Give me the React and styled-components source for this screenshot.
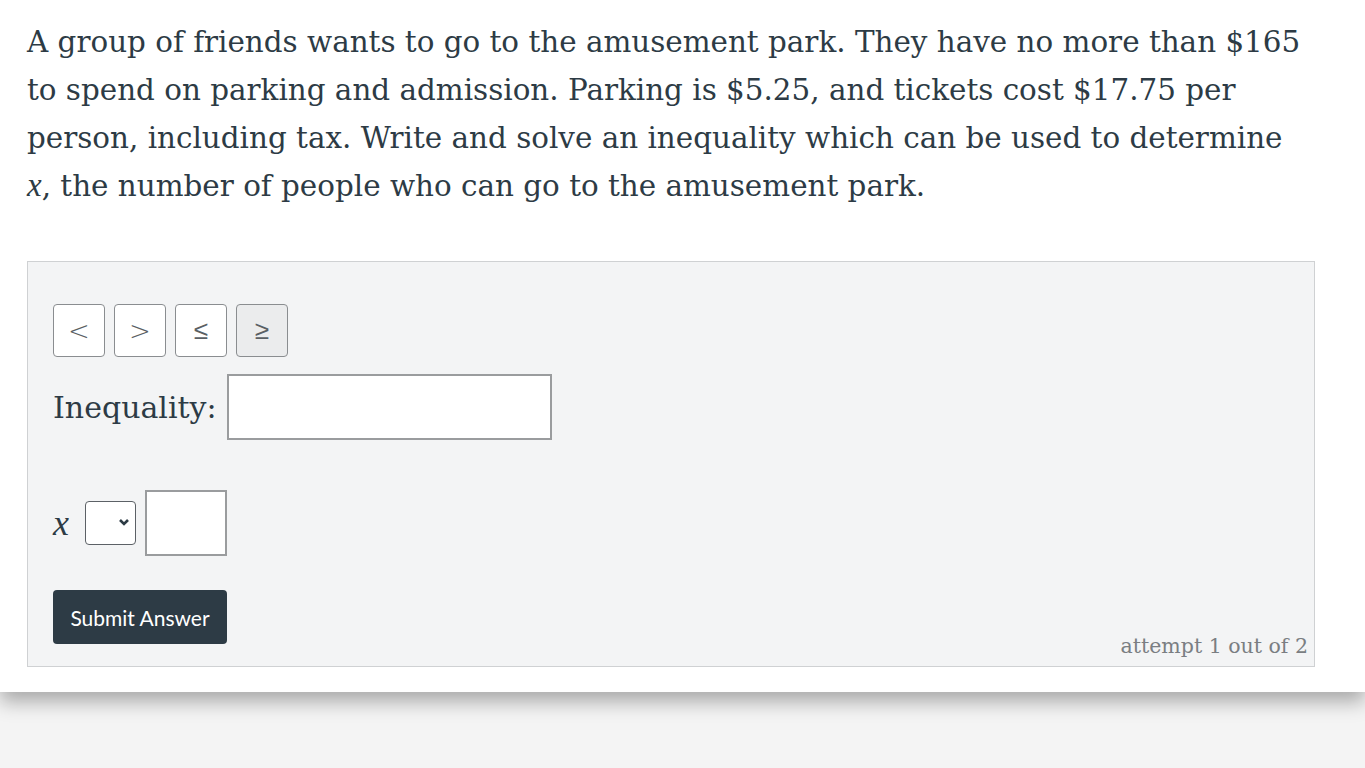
import React from 'react'
import styled, { createGlobalStyle } from 'styled-components'

const GlobalStyle = createGlobalStyle`
html, body {
    margin: 0;
    padding: 0;
    background: #f5f5f5;
}
* {
    box-sizing: border-box;
}
`;

const serif = `"DejaVu Serif", Georgia, "Liberation Serif", serif`;

const Page = styled.div`
width: 1365px;
height: 768px;
overflow: hidden;
background: #f4f4f4;
`;

const Card = styled.div`
background: #fff;
padding: 18px 50px 25px 27px;
box-shadow: 0 10px 18px rgba(0, 0, 0, 0.3);
`;

const Prompt = styled.p`
margin: 0;
font-family: ${serif};
font-size: 29.4px;
line-height: 48px;
color: #2d3b45;
white-space: nowrap;
`;

// math variable, set like TeX italic
const MathVar = styled.span`
font-family: "Liberation Serif", "DejaVu Serif", serif;
font-style: italic;
font-size: ${(props) => props.size || 34}px;
line-height: 1;
color: #2d3b45;
`;

const Panel = styled.div`
margin-top: 51px;
background: #f3f4f5;
border: 1px solid #cfd1d3;
padding: 42px 6px 8px 25px;
display: flex;
flex-direction: column;
`;

const Toolbar = styled.div`
display: flex;
gap: 9px;
`;

const SymbolBtn = styled.button`
width: 52px;
height: 53px;
border: 1px solid #8a8d90;
border-radius: 4px;
background: ${(props) => (props.active ? "#ebeced" : "#fff")};
color: #5a5f64;
font-family: "DejaVu Sans", sans-serif;
font-size: 26px;
font-weight: 200;
padding: 0;
display: flex;
align-items: center;
justify-content: center;
`;

const Row = styled.div`
display: flex;
align-items: center;
margin-top: ${(props) => props.mt || 0}px;
`;

const Label = styled.span`
font-family: ${serif};
font-size: 30px;
color: #2d3b45;
margin-right: 10px;
`;

const TextBox = styled.input`
width: ${(props) => props.w}px;
height: 66px;
border: 2px solid #9a9c9e;
background: #fff;
outline: none;
`;

const SelectWrap = styled.div`
position: relative;
width: 51px;
height: 44px;
margin: 0 9px 0 16px;
`;

const Select = styled.select`
appearance: none;
width: 100%;
height: 100%;
border: 1px solid #5c6166;
border-radius: 4px;
background: #fff;
`;

const Chevron = styled.svg`
position: absolute;
right: 5px;
top: 15px;
pointer-events: none;
`;

const Submit = styled.button`
margin-top: 34px;
width: 174px;
height: 54px;
border: none;
border-radius: 4px;
background: #2d3b45;
color: #fff;
font-family: Lato, "Open Sans", sans-serif;
font-size: 21px;
padding: 0;
`;

const Attempt = styled.div`
align-self: flex-end;
font-family: ${serif};
font-size: 20.5px;
color: #7a7e82;
margin-top: -10px;
`;

export default function App() {
    return (
        <Page>
            <GlobalStyle />
            <Card>
                <Prompt>
                    A group of friends wants to go to the amusement park. They have no more than $165<br />
                    to spend on parking and admission. Parking is $5.25, and tickets cost $17.75 per<br />
                    person, including tax. Write and solve an inequality which can be used to determine<br />
                    <MathVar size={33}>x</MathVar>, the number of people who can go to the amusement park.
                </Prompt>
                <Panel>
                    <Toolbar>
                        <SymbolBtn>&lt;</SymbolBtn>
                        <SymbolBtn>&gt;</SymbolBtn>
                        <SymbolBtn>≤</SymbolBtn>
                        <SymbolBtn active>≥</SymbolBtn>
                    </Toolbar>
                    <Row mt={17}>
                        <Label>Inequality:</Label>
                        <TextBox w={325} />
                    </Row>
                    <Row mt={50}>
                        <MathVar size={36}>x</MathVar>
                        <SelectWrap>
                            <Select />
                            <Chevron width="14" height="12" viewBox="0 0 14 12">
                                <path d="M3 4 L7 8 L11 4" fill="none" stroke="#2d3b45" strokeWidth="2.6" />
                            </Chevron>
                        </SelectWrap>
                        <TextBox w={82} />
                    </Row>
                    <Submit>Submit Answer</Submit>
                    <Attempt>attempt 1 out of 2</Attempt>
                </Panel>
            </Card>
        </Page>
    )
}
